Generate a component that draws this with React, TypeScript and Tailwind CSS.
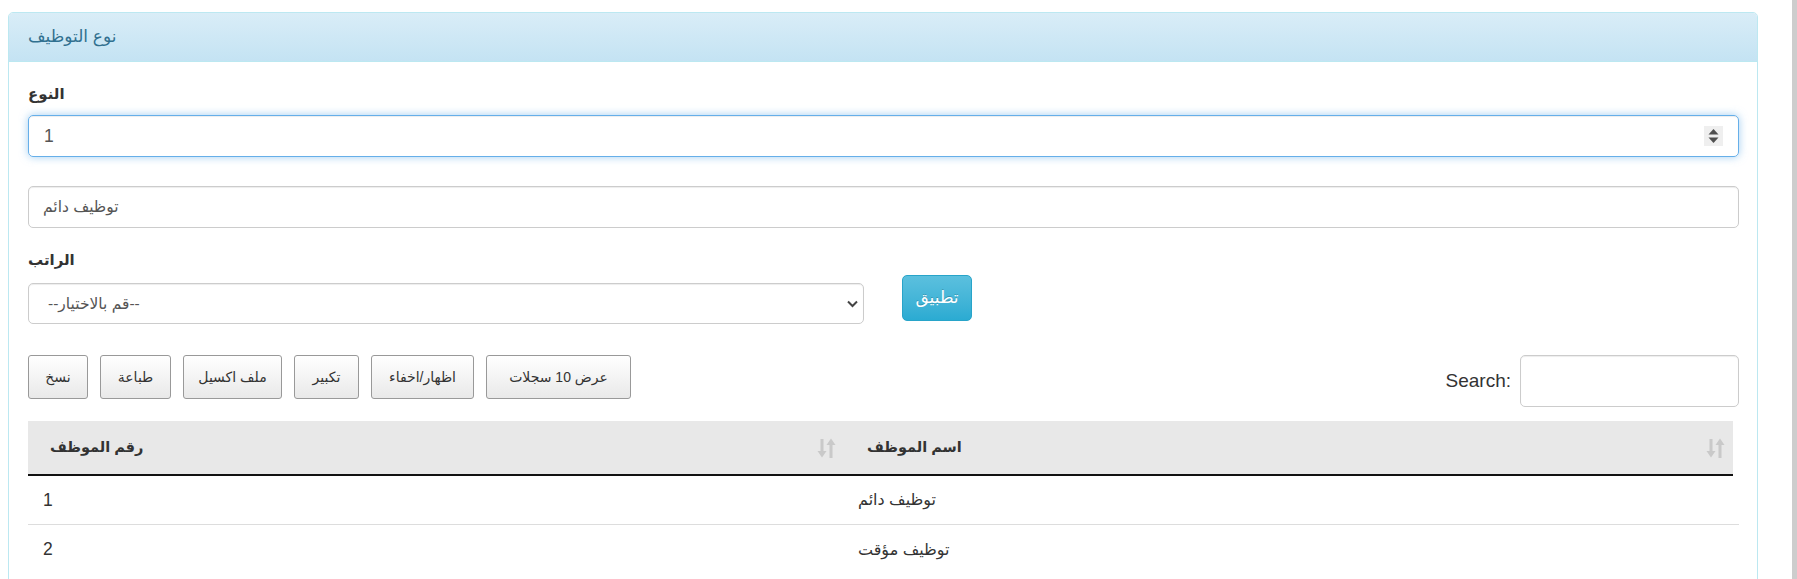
import React from 'react';

const buttons = [
  { label: 'نسخ', w: 'w-[60px]' },
  { label: 'طباعة', w: 'w-[71px]' },
  { label: 'ملف اكسيل', w: 'w-[99px]' },
  { label: 'تكبير', w: 'w-[65px]' },
  { label: 'اظهار/اخفاء', w: 'w-[103px]' },
  { label: 'عرض 10 سجلات', w: 'w-[145px]' },
];

const rows = [
  { id: '1', name: 'توظيف دائم' },
  { id: '2', name: 'توظيف مؤقت' },
];

function SortIcon() {
  return (
    <svg width="19" height="20" viewBox="0 0 19 20" className="shrink-0">
      <path d="M5 1 V14" stroke="#c9c9c9" strokeWidth="3" />
      <polygon points="0.5,13 9.5,13 5,19.5" fill="#c9c9c9" />
      <path d="M14 6 V20" stroke="#c9c9c9" strokeWidth="3" />
      <polygon points="9.5,7 18.5,7 14,0.5" fill="#c9c9c9" />
    </svg>
  );
}

function Spinner() {
  return (
    <div className="flex h-[20px] w-[19px] items-center justify-center bg-[#efefef]">
      <svg width="19" height="20" viewBox="0 0 19 20">
        <polygon points="4.5,8.5 14.5,8.5 9.5,3" fill="#505050" />
        <polygon points="4.5,11.5 14.5,11.5 9.5,17" fill="#505050" />
      </svg>
    </div>
  );
}

export default function App() {
  return (
    <div className="flex h-[579px] w-full overflow-hidden bg-white font-['Liberation_Sans','DejaVu_Sans',sans-serif] text-[17.5px] text-[#333]">
      <div className="ml-[8px] mt-[12px] w-[1750px] shrink-0">
        <div className="rounded-t-[5px] border border-[#bce8f1]">
          {/* Panel heading */}
          <div className="flex h-[49px] items-center rounded-t-[4px] border-b border-[#bce8f1] bg-linear-to-b from-[#d9edf7] to-[#c4e3f3] px-[19px] text-[17px] text-[#31708f]">
            نوع التوظيف
          </div>

          {/* Panel body */}
          <div className="pb-[60px] pl-[19px] pr-[18px] pt-[19px]">
            <label className="mb-[9px] block h-[25px] text-[15px] font-bold leading-[25px]">النوع</label>
            <div className="flex h-[42px] items-center justify-between rounded-[5px] border border-[#66afe9] pl-[15px] pr-[15px] text-[#555] shadow-[inset_0_1px_1px_rgba(0,0,0,0.075),0_0_8px_rgba(102,175,233,0.6)]">
              <span>1</span>
              <Spinner />
            </div>

            <div className="mt-[29px] flex h-[42px] items-center rounded-[5px] border border-[#ccc] pl-[14px] text-[15.5px] text-[#555] shadow-[inset_0_1px_1px_rgba(0,0,0,0.075)]">
              توظيف دائم
            </div>

            <div className="flex items-start">
              <div className="w-[836px] pt-[19px]">
                <label className="mb-[11px] block h-[25px] text-[15px] font-bold leading-[25px]">الراتب</label>
                <div className="flex h-[41px] items-center justify-between rounded-[5px] border border-[#ccc] pl-[19px] pr-[5px] text-[15.5px] text-[#555] shadow-[inset_0_1px_1px_rgba(0,0,0,0.075)]">
                  <span>--قم بالاختيار--</span>
                  <svg width="11" height="8" viewBox="0 0 11 8">
                    <path d="M1 1.5 L5.5 6 L10 1.5" fill="none" stroke="#444" strokeWidth="2" />
                  </svg>
                </div>
              </div>
              <div className="ml-[38px] pt-[47px]">
                <button className="flex h-[46px] w-[70px] items-center justify-center rounded-[5px] border border-[#28a4c9] bg-linear-to-b from-[#5bc0de] to-[#2aabd2] text-[17px] text-white [text-shadow:0_-1px_0_rgba(0,0,0,0.2)]">
                  تطبيق
                </button>
              </div>
            </div>

            {/* DataTables toolbar */}
            <div className="mt-[31px] flex items-start justify-between">
              <div className="flex gap-[12px]">
                {buttons.map((b) => (
                  <button
                    key={b.label}
                    className={`flex h-[44px] ${b.w} items-center justify-center rounded-[3px] border border-[#999] bg-linear-to-b from-white to-[#e9e9e9] text-[14px] text-[#333]`}
                  >
                    {b.label}
                  </button>
                ))}
              </div>
              <div className="flex items-center gap-[9px]">
                <span className="text-[19px]">Search:</span>
                <div className="h-[52px] w-[219px] rounded-[5px] border border-[#ccc] shadow-[inset_0_1px_1px_rgba(0,0,0,0.075)]" />
              </div>
            </div>

            {/* Table */}
            <div className="mt-[14px]">
              <div className="flex h-[55px] w-[1705px] border-b-2 border-[#111] bg-[#e8e8e8] text-[14.5px] font-bold">
                <div className="flex w-[817px] items-center justify-between pl-[22px] pr-[9px]">
                  <span>رقم الموظف</span>
                  <SortIcon />
                </div>
                <div className="flex flex-1 items-center justify-between pl-[22px] pr-[8px]">
                  <span>اسم الموظف</span>
                  <SortIcon />
                </div>
              </div>
              {rows.map((r, i) => (
                <div
                  key={r.id}
                  className={i < rows.length - 1 ? 'flex h-[49px] items-center border-b border-[#ddd]' : 'flex h-[49px] items-center'}
                >
                  <div className="w-[817px] pl-[15px]">{r.id}</div>
                  <div className="flex-1 pl-[13px] text-[16px]">{r.name}</div>
                </div>
              ))}
            </div>
          </div>
        </div>
      </div>
      <div className="flex-1" />
      <div className="w-[5px] shrink-0 bg-[#cdcdcd]" />
    </div>
  );
}
